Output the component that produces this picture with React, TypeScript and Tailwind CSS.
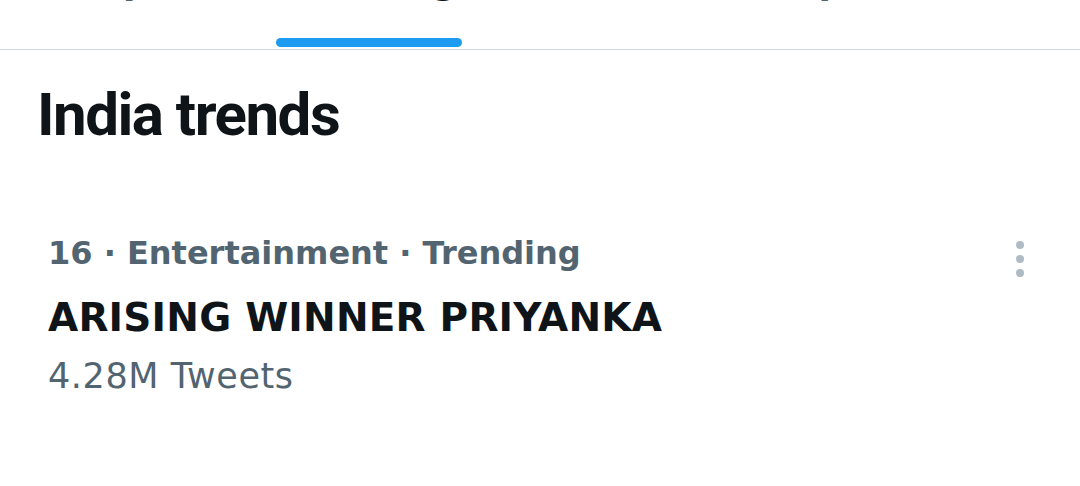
import React from "react";

const tabs = [
  { label: "For you", width: "w-[240px]", active: false },
  { label: "Trending", width: "w-[258px]", active: true },
  { label: "News", width: "w-[240px]", active: false },
  { label: "Sports", width: "w-[242px]", active: false },
];

const TabBar = () => (
  <div className="h-[50px] overflow-hidden border-b border-[#cfd9de]">
    <div className="flex -mt-[36px]">
      {tabs.map((t) => (
        <div key={t.label} className={`flex flex-col items-center shrink-0 ${t.width}`}>
          <span
            className={`h-[36px] text-[36px] leading-[36px] font-bold whitespace-nowrap ${
              t.active ? "text-[#0f1419]" : "text-[#536471]"
            }`}
          >
            {t.label}
          </span>
          {t.active ? (
            <div className="mt-[38px] h-[9px] w-[186px] rounded-full bg-[#1d9bf0]" />
          ) : null}
        </div>
      ))}
    </div>
  </div>
);

const MoreDots = () => (
  <div className="flex flex-col items-center gap-[6px] mt-[8px]">
    <span className="block w-[8px] h-[8px] rounded-full bg-[#aebbc4]" />
    <span className="block w-[8px] h-[8px] rounded-full bg-[#aebbc4]" />
    <span className="block w-[8px] h-[8px] rounded-full bg-[#aebbc4]" />
  </div>
);

export default function App() {
  return (
    <div
      className="w-[1080px] h-[486px] overflow-hidden bg-white"
      style={{ fontFamily: '"DejaVu Sans", sans-serif' }}
    >
      <TabBar />
      <h2
        className="mt-[35px] pl-[37px] text-[60px] leading-[60px] font-bold tracking-[-1.5px] text-[#0f1419]"
        style={{ fontFamily: "Roboto, sans-serif" }}
      >
        India trends
      </h2>
      <div className="mt-[88px] flex justify-between pl-[48px] pr-[56px]">
        <div className="flex flex-col">
          <span className="text-[32px] leading-[40px] font-bold text-[#536471]">
            16 · Entertainment · Trending
          </span>
          <span className="mt-[21px] text-[39px] leading-[48px] font-bold tracking-[0.2px] text-[#0f1419]">
            ARISING WINNER PRIYANKA
          </span>
          <span className="mt-[14px] text-[35px] leading-[40px] tracking-[0.6px] text-[#536471]">
            4.28M Tweets
          </span>
        </div>
        <MoreDots />
      </div>
    </div>
  );
}
